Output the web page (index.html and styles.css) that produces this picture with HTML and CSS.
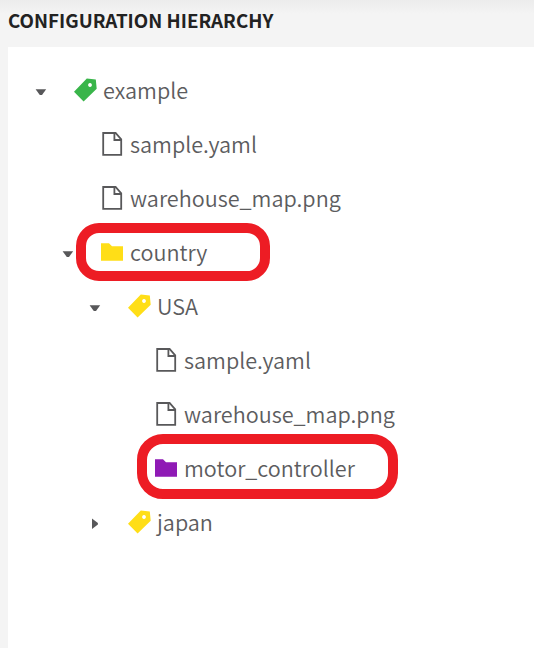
FILE: index.html
```html
<!DOCTYPE html>
<html lang="en">
<head>
<meta charset="utf-8">
<title>Configuration Hierarchy</title>
<link rel="stylesheet" href="styles.css">
</head>
<body>
<svg class="sprite" aria-hidden="true">
  <symbol id="tag" viewBox="0 0 24 24"><path fill="currentColor" fill-rule="evenodd" d="M0 13.7 12.8.5 21.8 1.5 22.7 10.7 9.6 23.5ZM16 5.1a1.9 1.9 0 1 0 .01 0Z"/></symbol>
  <symbol id="file" viewBox="0 0 24 24"><path fill="none" stroke="currentColor" stroke-width="1.8" d="M2.2 1H14.6L20.2 7.3V22.8H2.2ZM13.4 1V8H20.2"/></symbol>
  <symbol id="folder" viewBox="0 0 24 24"><path fill="currentColor" d="M0 3.2H8L11 6.2H22V20.8H0Z"/></symbol>
  <symbol id="down" viewBox="0 0 12 12"><path fill="currentColor" d="M.6 3.2H11.2L7 8.9H4.8Z"/></symbol>
  <symbol id="right" viewBox="0 0 12 12"><path fill="currentColor" d="M3 .4 8.9 5V6.4L3 11Z"/></symbol>
</svg>
<section class="panel">
  <h1 class="title">CONFIGURATION HIERARCHY</h1>
  <div class="content">
    <ul class="tree">
      <li>
        <div class="row"><svg class="toggle"><use href="#down"/></svg><svg class="icon green"><use href="#tag"/></svg><span class="label">example</span></div>
        <ul>
          <li><div class="row"><span class="toggle"></span><svg class="icon"><use href="#file"/></svg><span class="label">sample.yaml</span></div></li>
          <li><div class="row"><span class="toggle"></span><svg class="icon"><use href="#file"/></svg><span class="label">warehouse_map.png</span></div></li>
          <li>
            <div class="row"><svg class="toggle"><use href="#down"/></svg><svg class="icon yellow"><use href="#folder"/></svg><span class="label">country</span><span class="ring ring-country"></span></div>
            <ul>
              <li>
                <div class="row"><svg class="toggle"><use href="#down"/></svg><svg class="icon yellow"><use href="#tag"/></svg><span class="label">USA</span></div>
                <ul>
                  <li><div class="row"><span class="toggle"></span><svg class="icon"><use href="#file"/></svg><span class="label">sample.yaml</span></div></li>
                  <li><div class="row"><span class="toggle"></span><svg class="icon"><use href="#file"/></svg><span class="label">warehouse_map.png</span></div></li>
                  <li><div class="row"><span class="toggle"></span><svg class="icon purple"><use href="#folder"/></svg><span class="label">motor_controller</span><span class="ring ring-motor"></span></div></li>
                </ul>
              </li>
              <li><div class="row"><svg class="toggle"><use href="#right"/></svg><svg class="icon yellow"><use href="#tag"/></svg><span class="label">japan</span></div></li>
            </ul>
          </li>
        </ul>
      </li>
    </ul>
  </div>
</section>
</body>
</html>
```
FILE: styles.css
```css
* { box-sizing: border-box; }
body {
  margin: 0;
  font-family: "Source Sans Pro", "Noto Sans CJK SC", sans-serif;
  color: #58585a;
  background: #f4f4f4;
}
.sprite { display: none; }
.panel {
  display: flex;
  flex-direction: column;
  height: 648px;
  padding-left: 8px;
  overflow: hidden;
  background: linear-gradient(#ececec, #f4f4f4 14px);
}
.title {
  margin: 0;
  height: 47px;
  flex: none;
  font-size: 18.75px;
  font-weight: 700;
  line-height: 40px;
  color: #222;
  white-space: nowrap;
}
.content {
  flex: 1;
  padding: 17px 0 0 27px;
  background: #fff;
}
ul { margin: 0; padding: 0 0 0 27px; list-style: none; }
.tree { padding: 0; }
.row {
  position: relative;
  display: flex;
  align-items: center;
  height: 54px;
}
.toggle { width: 12px; height: 12px; margin-right: 27px; flex: none; }
svg.toggle { margin-top: 1px; }
.icon { width: 24px; height: 24px; margin-right: 5px; margin-bottom: 2px; flex: none; }
.label {
  height: 54px;
  font-size: 21.6px;
  font-weight: 350;
  line-height: 52px;
  color: #5c5c5e;
  white-space: nowrap;
}
.green { color: #39b54a; }
.yellow { color: #ffde17; }
.purple { color: #8f1ab5; }
.ring { position: absolute; border: 10px solid #ed1c24; }
.ring-country { left: 14px; top: -3px; width: 194px; height: 58px; border-radius: 23px; }
.ring-motor { left: 21px; top: -8px; width: 261px; height: 65px; border-radius: 26px; }
```
